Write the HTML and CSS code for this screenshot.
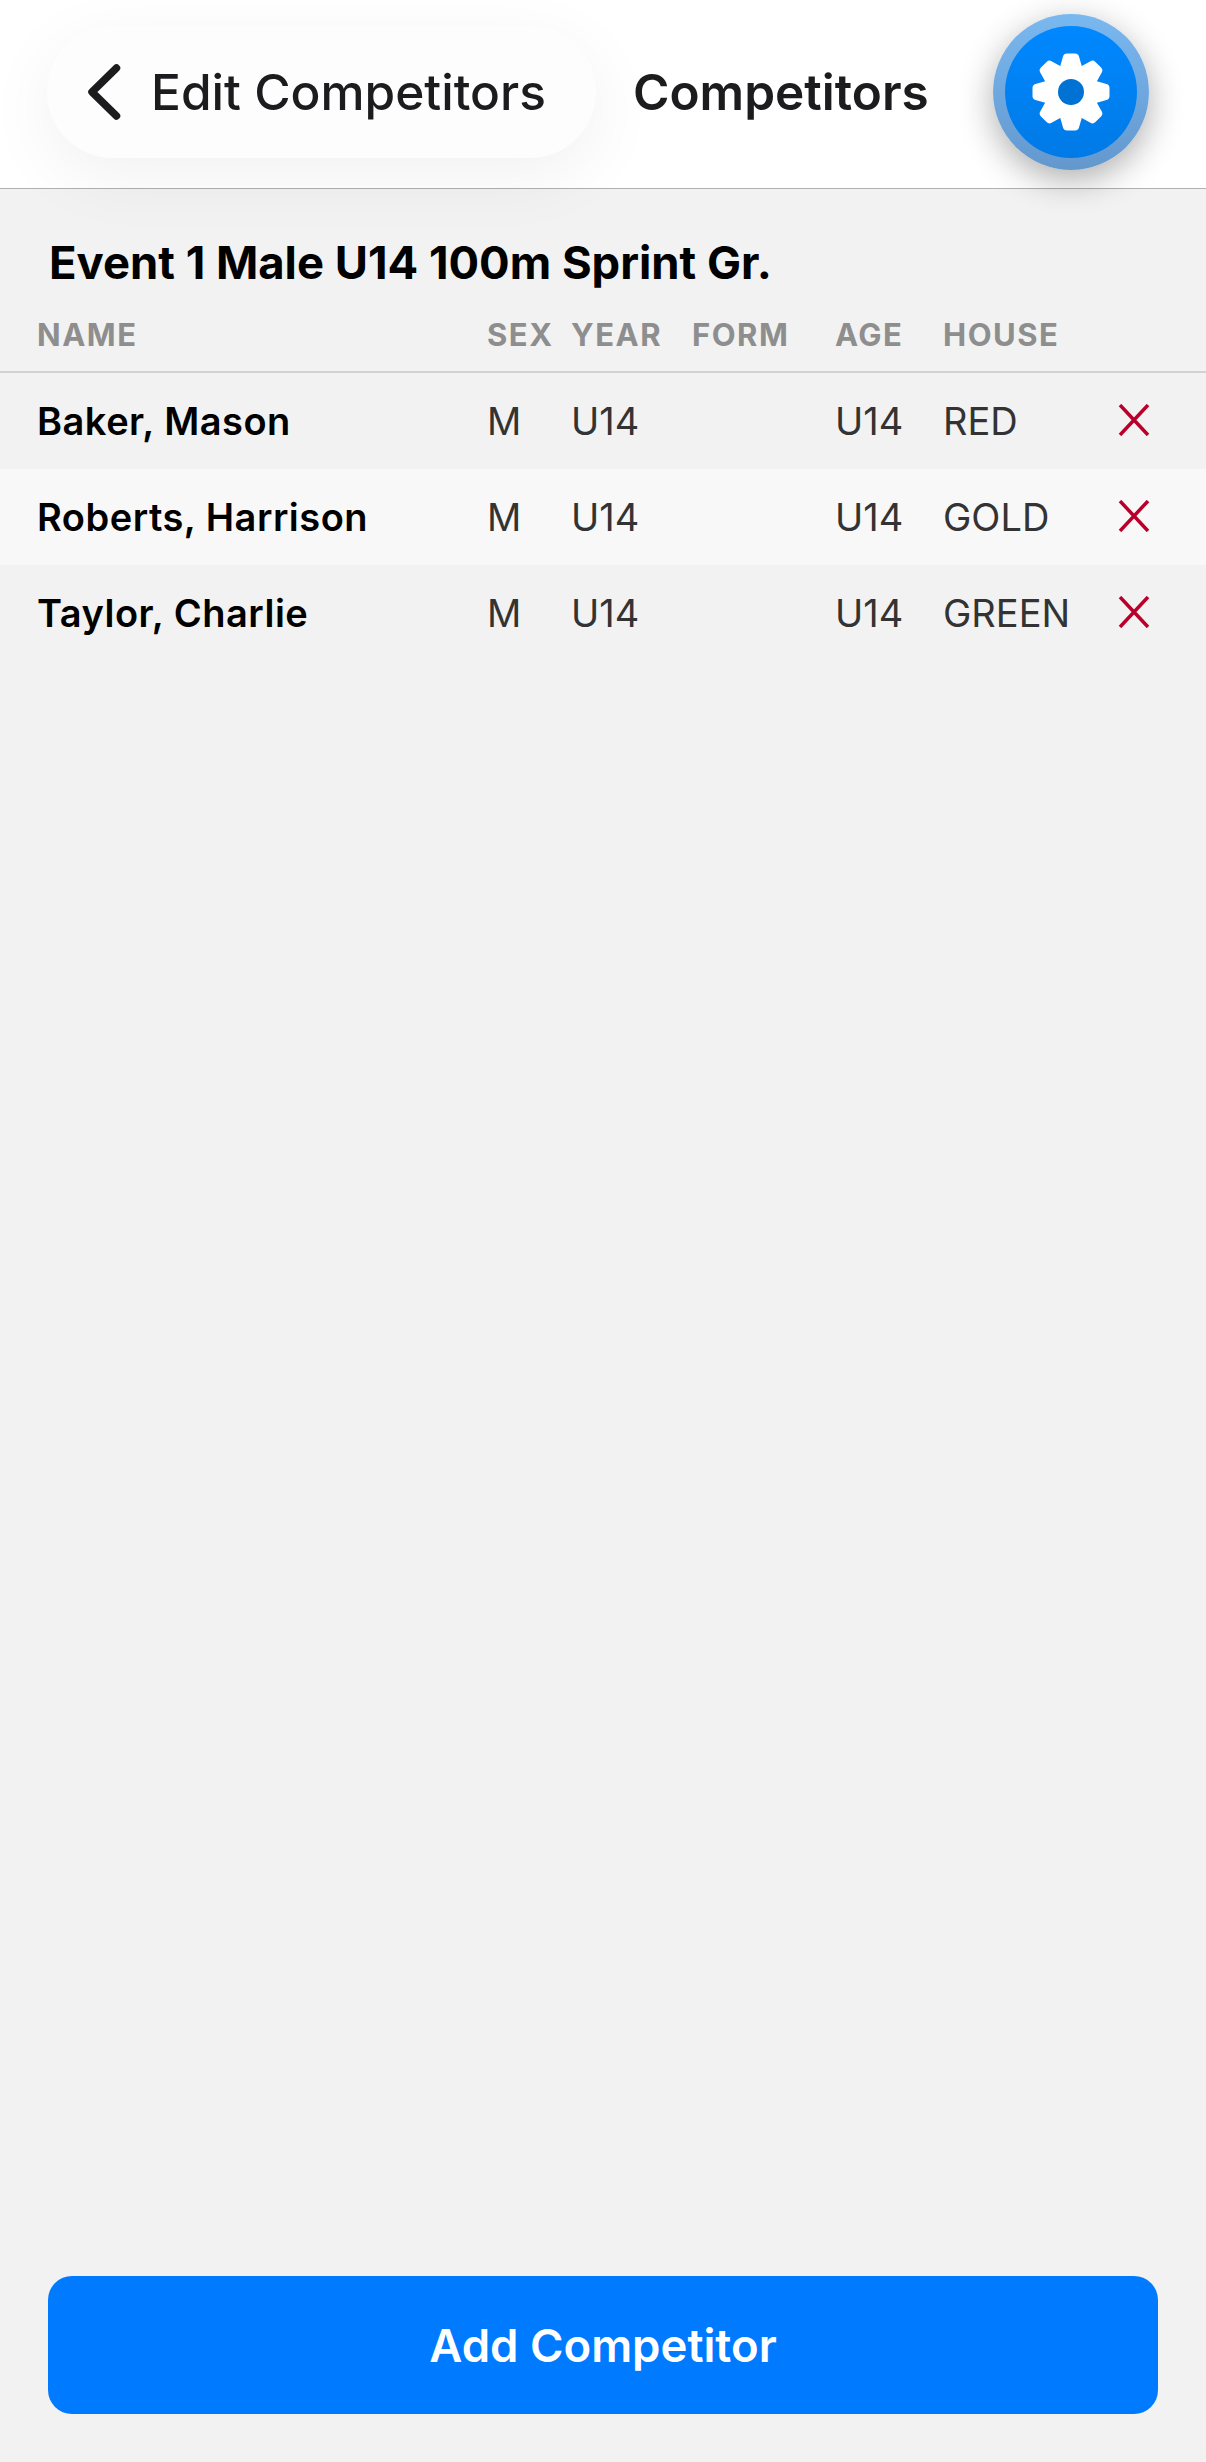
FILE: index.html
```html
<!DOCTYPE html>
<html lang="en">
<head>
<meta charset="utf-8">
<title>Competitors</title>
<link rel="stylesheet" href="styles.css">
</head>
<body>
<div class="screen">
  <header class="topbar">
    <button class="back">
      <svg class="chevron" viewBox="0 0 34 56"><path d="M29.5 4 L5 28 L29.5 52" /></svg>
      <span>Edit Competitors</span>
    </button>
    <h1 class="title">Competitors</h1>
    <button class="fab">
      <span class="fab-inner">
        <svg class="gear" viewBox="-40 -40 80 80">
          <defs><path id="tooth" d="M-11 -25 L-8 -35.5 Q-7.2 -38.5 -4 -38.5 L4 -38.5 Q7.2 -38.5 8 -35.5 L11 -25 Z"/></defs>
          <circle r="28"/>
          <use href="#tooth"/>
          <use href="#tooth" transform="rotate(45)"/>
          <use href="#tooth" transform="rotate(90)"/>
          <use href="#tooth" transform="rotate(135)"/>
          <use href="#tooth" transform="rotate(180)"/>
          <use href="#tooth" transform="rotate(225)"/>
          <use href="#tooth" transform="rotate(270)"/>
          <use href="#tooth" transform="rotate(315)"/>
          <circle class="gear-hole" r="13"/>
        </svg>
      </span>
    </button>
  </header>

  <main class="content">
    <h2 class="event">Event 1 Male U14 100m Sprint Gr.</h2>
    <div class="row head">
      <span>NAME</span><span>SEX</span><span>YEAR</span><span>FORM</span><span>AGE</span><span>HOUSE</span><span></span>
    </div>
    <div class="row item">
      <span class="name">Baker, Mason</span><span>M</span><span>U14</span><span></span><span>U14</span><span>RED</span>
      <svg class="remove" viewBox="0 0 32 32"><path d="M2 1 L30 31 M30 1 L2 31"/></svg>
    </div>
    <div class="row item alt">
      <span class="name">Roberts, Harrison</span><span>M</span><span>U14</span><span></span><span>U14</span><span>GOLD</span>
      <svg class="remove" viewBox="0 0 32 32"><path d="M2 1 L30 31 M30 1 L2 31"/></svg>
    </div>
    <div class="row item">
      <span class="name">Taylor, Charlie</span><span>M</span><span>U14</span><span></span><span>U14</span><span>GREEN</span>
      <svg class="remove" viewBox="0 0 32 32"><path d="M2 1 L30 31 M30 1 L2 31"/></svg>
    </div>
  </main>

  <footer class="footer">
    <button class="add">Add Competitor</button>
  </footer>
</div>
</body>
</html>
```
FILE: styles.css
```css
* { box-sizing: border-box; }
html, body { margin: 0; padding: 0; }
body {
  width: 1206px;
  height: 2462px;
  background: #f2f2f2;
  font-family: Inter, "Liberation Sans", sans-serif;
  overflow: hidden;
}
button { font-family: inherit; border: 0; padding: 0; }
.screen { display: flex; flex-direction: column; height: 2462px; }

.topbar {
  height: 189px;
  flex: none;
  background: #fff;
  border-bottom: 1px solid #b0b0b0;
  display: flex;
  align-items: flex-start;
  padding: 14px 57px 0 47px;
  position: relative;
  z-index: 1;
}
.back {
  width: 549px;
  height: 132px;
  margin-top: 12px;
  border-radius: 66px;
  background: #fdfdfd;
  box-shadow: 0 18px 70px rgba(0, 0, 0, 0.06);
  display: flex;
  align-items: center;
  padding-left: 40px;
  gap: 30px;
  color: #1c1c1e;
  font-size: 49.6px;
  font-weight: 500;
}
.chevron { width: 34px; height: 56px; flex: none; }
.chevron path { fill: none; stroke: #1c1c1e; stroke-width: 7.5; stroke-linecap: round; stroke-linejoin: round; }
.title {
  margin: 12px 0 0 37px;
  height: 132px;
  line-height: 132px;
  font-size: 49.5px;
  font-weight: 600;
  color: #1c1c1e;
  flex: 1;
}
.fab {
  width: 156px;
  height: 156px;
  flex: none;
  border-radius: 50%;
  background: linear-gradient(#7ab8f0, #6398cd);
  box-shadow: 0 10px 34px rgba(0, 0, 0, 0.32);
  display: flex;
  align-items: center;
  justify-content: center;
}
.fab-inner {
  width: 132px;
  height: 132px;
  border-radius: 50%;
  background: linear-gradient(#0088ff, #007ae6);
  display: flex;
  align-items: center;
  justify-content: center;
}
.gear { width: 80px; height: 80px; fill: #fff; }
.gear-hole { fill: #0072d4; }

.content { flex: 1; }
.event {
  margin: 0;
  padding: 27px 0 0 49px;
  height: 121px;
  line-height: 94px;
  font-size: 45.4px;
  font-weight: 700;
  color: #000;
  white-space: nowrap;
}
.row {
  display: grid;
  grid-template-columns: 450px 84px 121px 143px 108px 175px 30px;
  padding-left: 37px;
  align-items: center;
}
.head {
  height: 63px;
  padding-bottom: 13px;
  font-size: 31px;
  font-weight: 700;
  letter-spacing: 1.5px;
  color: #8e8e8e;
  border-bottom: 2px solid #d2d2d2;
}
.item {
  height: 96px;
  font-size: 38px;
  color: #333;
}
.alt { background: #f8f8f8; }
.name { font-weight: 600; color: #000; letter-spacing: 0.5px; }
.remove { width: 32px; height: 32px; margin-top: -3px; }
.remove path { fill: none; stroke: #b8002a; stroke-width: 3.5; }

.footer { flex: none; padding: 0 48px 48px; }
.add {
  display: block;
  width: 1110px;
  height: 138px;
  border-radius: 24px;
  background: #007aff;
  color: #fff;
  font-size: 45.5px;
  font-weight: 600;
}
```
